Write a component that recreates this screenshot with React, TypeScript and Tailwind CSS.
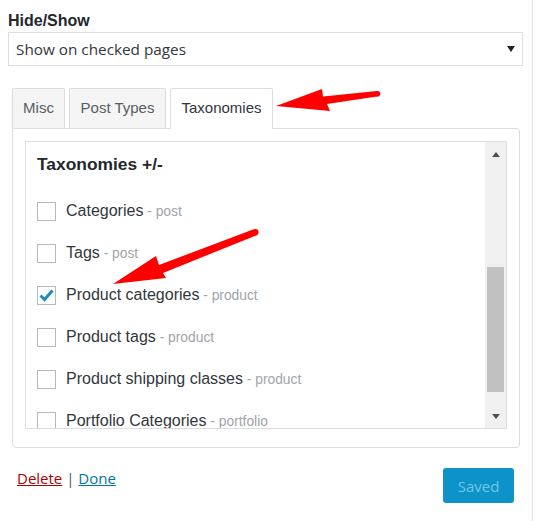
import React from 'react'

const rows = [
  { label: 'Categories', type: 'post', checked: false },
  { label: 'Tags', type: 'post', checked: false },
  { label: 'Product categories', type: 'product', checked: true },
  { label: 'Product tags', type: 'product', checked: false },
  { label: 'Product shipping classes', type: 'product', checked: false },
  { label: 'Portfolio Categories', type: 'portfolio', checked: false },
]

const Checkbox = ({ checked }: { checked: boolean }) => (
  <div className="flex h-[19px] w-[19px] shrink-0 items-center justify-center border border-[#b4b9be] bg-white">
    {checked && (
      <svg width="15" height="13" viewBox="0 0 15 13">
        <path d="M1.5 6.5 L5.5 10.5 L13.5 1.5" fill="none" stroke="#1e8cbe" strokeWidth="3" />
      </svg>
    )}
  </div>
)

const App = () => {
  return (
    <div className="relative h-[521px] w-[535px] overflow-hidden bg-white">
      <div className="h-full w-[533px] border-r border-[#e5e5e5] pl-[8px] pt-[11px]">
        <div className="mb-[1px] h-[20px] font-['Liberation_Sans',Arial,sans-serif] text-[16px] font-bold leading-[20px] text-[#23282d]">
          Hide/Show
        </div>
        <div className="flex h-[34px] w-[515px] items-center justify-between border border-[#dddddd] bg-white pl-[7px] pr-[7px] font-['Open_Sans',sans-serif] text-[15.3px] text-[#32373c]">
          <span>Show on checked pages</span>
          <svg width="8" height="6" viewBox="0 0 8 6">
            <path d="M0 0 L8 0 L4 6 Z" fill="#222" />
          </svg>
        </div>

        <div className="ml-[4px] mt-[22px] w-[508px] font-['Liberation_Sans',Arial,sans-serif]">
          <div className="flex h-[40px] items-start gap-[4px]">
            <div className="flex h-[40px] w-[53px] items-center justify-center rounded-t-[2px] border border-b-0 border-[#dddddd] bg-[#f5f5f5] text-[15px] text-[#555d66]">
              Misc
            </div>
            <div className="flex h-[40px] w-[97px] items-center justify-center rounded-t-[2px] border border-b-0 border-[#dddddd] bg-[#f5f5f5] text-[15px] text-[#555d66]">
              Post Types
            </div>
            <div className="relative z-10 flex h-[41px] w-[103px] items-center justify-center rounded-t-[2px] border border-b-0 border-[#dddddd] bg-white pb-px text-[15px] text-[#32373c]">
              Taxonomies
            </div>
          </div>

          <div className="rounded-b-[4px] rounded-tr-[4px] border border-[#dddddd] px-[12px] pb-[18px] pt-[12px]">
            <div className="flex h-[288px] overflow-hidden border border-[#dddddd]">
              <div className="flex-1 overflow-hidden pl-[11px] pt-[12px]">
                <div className="mb-[16px] h-[20px] text-[17.4px] font-bold leading-[20px] text-[#23282d]">
                  Taxonomies +/-
                </div>
                {rows.map((row) => (
                  <div key={row.label} className="flex h-[42px] items-center gap-[10px]">
                    <Checkbox checked={row.checked} />
                    <div className="whitespace-nowrap text-[16px] leading-[20px] text-[#32373c]">
                      {row.label}
                      <span className="text-[13.8px] text-[#a0a5aa]"> - {row.type}</span>
                    </div>
                  </div>
                ))}
              </div>
              <div className="flex w-[21px] flex-col bg-[#f0f0f0]">
                <div className="flex h-[24px] items-center justify-center">
                  <svg width="8" height="5" viewBox="0 0 8 5">
                    <path d="M0 5 L8 5 L4 0 Z" fill="#505050" />
                  </svg>
                </div>
                <div className="flex-1 px-[2px] pt-[101px]">
                  <div className="h-[125px] bg-[#c1c1c1]" />
                </div>
                <div className="flex h-[24px] items-center justify-center">
                  <svg width="8" height="5" viewBox="0 0 8 5">
                    <path d="M0 0 L8 0 L4 5 Z" fill="#505050" />
                  </svg>
                </div>
              </div>
            </div>
          </div>
        </div>

        <div className="ml-[9px] mt-[20px] flex w-[497px] items-start justify-between font-['Open_Sans',sans-serif] text-[15px] leading-[20px]">
          <div className="text-[#555]">
            <a className="text-[#a00] underline">Delete</a> | <a className="text-[#0073aa] underline">Done</a>
          </div>
          <button className="h-[35px] w-[71px] rounded-[3px] bg-[#0d93c7] text-[15px] text-[#6cc8ea]">
            Saved
          </button>
        </div>
      </div>

      {/* annotation arrows */}
      <svg className="pointer-events-none absolute left-0 top-0" width="535" height="521">
        <polygon
          points="276,106 322,89 323,96.5 377,91 377,96.5 327,104 330,111"
          fill="#ff0000"
        />
        <circle cx="377.5" cy="93.8" r="2.8" fill="#ff0000" />
        <polygon
          points="113,284 156,256 159,265 253,229.5 257,235 163,273 166,278"
          fill="#ff0000"
        />
        <circle cx="255.3" cy="232.3" r="3.2" fill="#ff0000" />
      </svg>
    </div>
  )
}

export default App
